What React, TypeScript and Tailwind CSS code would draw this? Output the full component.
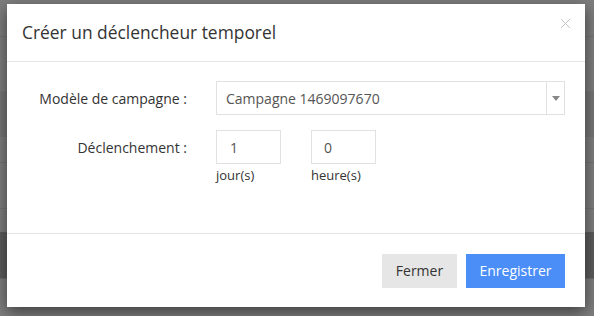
import { X } from 'lucide-react';

export default function App() {
  return (
    <div
      className="relative h-[316px] w-[594px] overflow-hidden bg-[#7e7e7e]"
      style={{ fontFamily: '"Open Sans", "Liberation Sans", sans-serif' }}
    >
      {/* faded page behind the backdrop */}
      <div className="flex flex-col">
        <div className="h-[37px] border-b border-[#727272]" />
        <div className="h-[55px] border-b border-[#777777]" />
        <div className="h-[45px] bg-[#767676]" />
        <div className="h-[26px] border-b border-[#727272]" />
        <div className="h-[46px] border-b border-[#727272]" />
        <div className="h-[23px]" />
        <div className="h-[47px] border-b border-[#6c6c6c] bg-[#5c5c5c]" />
      </div>

      <div className="absolute left-[7px] top-[4px] flex h-[303px] w-[578px] flex-col bg-white shadow-[0_5px_15px_rgba(0,0,0,0.5)]">
        {/* header */}
        <div className="flex h-[58px] items-center justify-between border-b border-[#e5e5e5] pl-[15px] pr-[11px]">
          <h4 className="text-[17.4px] leading-none text-[#333]">Créer un déclencheur temporel</h4>
          <X className="mb-[18px] h-[17px] w-[17px] text-[#c2c2c2]" strokeWidth={1.4} />
        </div>

        {/* body */}
        <div className="flex-1 px-[15px] pt-[19px] text-[14px] text-[#333]">
          <div className="flex items-center">
            <label className="w-[165px] text-right">Modèle de campagne :</label>
            <div className="ml-[29px] flex h-[34px] w-[349px] items-center border border-[#e1e1e1] text-[#555]">
              <span className="flex-1 pl-[9px]">Campagne 1469097670</span>
              <div className="flex h-full w-[18px] items-center justify-center border-l border-[#e1e1e1]">
                <span className="h-0 w-0 border-x-[4px] border-t-[5px] border-x-transparent border-t-[#888]" />
              </div>
            </div>
          </div>

          <div className="mt-[15px] flex items-start">
            <label className="flex h-[34px] w-[165px] items-center justify-end">Déclenchement :</label>
            <div className="ml-[29px] flex gap-[30px]">
              <div className="flex flex-col">
                <div className="flex h-[34px] w-[65px] items-center border border-[#e1e1e1] pl-[13px] text-[#555]">1</div>
                <span className="mt-[2px] text-[13px] leading-[18px]">jour(s)</span>
              </div>
              <div className="flex flex-col">
                <div className="flex h-[34px] w-[65px] items-center border border-[#e1e1e1] pl-[12px] text-[#555]">0</div>
                <span className="mt-[2px] text-[13px] leading-[18px]">heure(s)</span>
              </div>
            </div>
          </div>
        </div>

        {/* footer */}
        <div className="flex h-[74px] items-center justify-end gap-[9px] border-t border-[#e5e5e5] pr-[20px]">
          <button className="h-[34px] w-[75px] bg-[#e6e6e6] text-[14px] text-[#333]">Fermer</button>
          <button className="h-[34px] w-[99px] bg-[#4b8ef8] text-[14px] text-white">Enregistrer</button>
        </div>
      </div>
    </div>
  );
}
